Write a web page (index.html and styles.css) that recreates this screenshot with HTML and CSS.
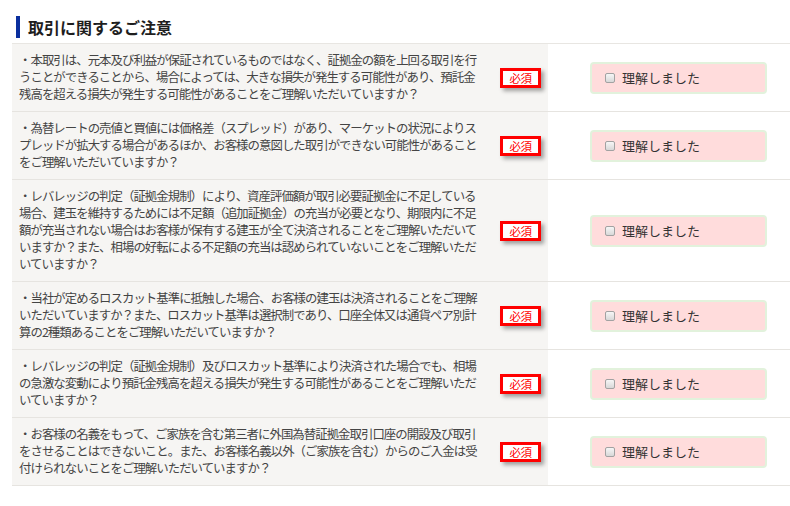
FILE: index.html
```html
<!DOCTYPE html>
<html lang="ja">
<head>
<meta charset="utf-8">
<title>取引に関するご注意</title>
<link rel="stylesheet" href="styles.css">
</head>
<body>
<div class="page">
  <h2 class="title">取引に関するご注意</h2>
  <div class="table">
    <div class="row">
      <div class="q">
        <p class="qtext">・本取引は、元本及び利益が保証されているものではなく、証拠金の額を上回る取引を行<br>うことができることから、場合によっては、大きな損失が発生する可能性があり、預託金<br>残高を超える損失が発生する可能性があることをご理解いただいていますか？</p>
        <span class="badge">必須</span>
      </div>
      <div class="a"><label class="agree"><span class="cb"></span><span class="lbl">理解しました</span></label></div>
    </div>
    <div class="row">
      <div class="q">
        <p class="qtext">・為替レートの売値と買値には価格差（スプレッド）があり、マーケットの状況によりス<br>プレッドが拡大する場合があるほか、お客様の意図した取引ができない可能性があること<br>をご理解いただいていますか？</p>
        <span class="badge">必須</span>
      </div>
      <div class="a"><label class="agree"><span class="cb"></span><span class="lbl">理解しました</span></label></div>
    </div>
    <div class="row">
      <div class="q">
        <p class="qtext">・レバレッジの判定（証拠金規制）により、資産評価額が取引必要証拠金に不足している<br>場合、建玉を維持するためには不足額（追加証拠金）の充当が必要となり、期限内に不足<br>額が充当されない場合はお客様が保有する建玉が全て決済されることをご理解いただいて<br>いますか？また、相場の好転による不足額の充当は認められていないことをご理解いただ<br>いていますか？</p>
        <span class="badge">必須</span>
      </div>
      <div class="a"><label class="agree"><span class="cb"></span><span class="lbl">理解しました</span></label></div>
    </div>
    <div class="row">
      <div class="q">
        <p class="qtext">・当社が定めるロスカット基準に抵触した場合、お客様の建玉は決済されることをご理解<br>いただいていますか？また、ロスカット基準は選択制であり、口座全体又は通貨ペア別計<br>算の2種類あることをご理解いただいていますか？</p>
        <span class="badge">必須</span>
      </div>
      <div class="a"><label class="agree"><span class="cb"></span><span class="lbl">理解しました</span></label></div>
    </div>
    <div class="row">
      <div class="q">
        <p class="qtext">・レバレッジの判定（証拠金規制）及びロスカット基準により決済された場合でも、相場<br>の急激な変動により預託金残高を超える損失が発生する可能性があることをご理解いただ<br>いていますか？</p>
        <span class="badge">必須</span>
      </div>
      <div class="a"><label class="agree"><span class="cb"></span><span class="lbl">理解しました</span></label></div>
    </div>
    <div class="row">
      <div class="q">
        <p class="qtext">・お客様の名義をもって、ご家族を含む第三者に外国為替証拠金取引口座の開設及び取引<br>をさせることはできないこと。また、お客様名義以外（ご家族を含む）からのご入金は受<br>付けられないことをご理解いただいていますか？</p>
        <span class="badge">必須</span>
      </div>
      <div class="a"><label class="agree"><span class="cb"></span><span class="lbl">理解しました</span></label></div>
    </div>
  </div>
</div>
</body>
</html>
```

FILE: styles.css
```css
html, body {
  margin: 0;
  padding: 0;
  background: #ffffff;
}
body {
  font-family: "Noto Sans CJK JP", "Noto Sans", sans-serif;
  color: #444444;
}
.page {
  padding: 16px 0 0 12px;
}
.title {
  margin: 0 0 5px 4px;
  border-left: 4px solid #0a2f9e;
  padding-left: 8px;
  height: 22px;
  line-height: 22px;
  font-size: 16px;
  font-weight: bold;
  color: #1e1e1e;
}
.table {
  border-top: 1px solid #e8e6e2;
}
.row {
  display: grid;
  grid-template-columns: 536px 1fr;
  border-bottom: 1px solid #e6e4e0;
}
.q {
  display: flex;
  align-items: center;
  background: #f6f5f3;
  padding: 8px 0 8px 7px;
}
.qtext {
  margin: 0;
  width: 474px;
  font-size: 12.4px;
  letter-spacing: -0.95px;
  line-height: 17px;
  white-space: nowrap;
  color: #444444;
}
.badge {
  margin-left: 7px;
  box-sizing: border-box;
  width: 41px;
  height: 20px;
  border: 3px solid #ff0000;
  background: #ffffff;
  color: #ff0000;
  font-size: 11.5px;
  line-height: 14px;
  text-align: center;
  letter-spacing: -0.5px;
  box-shadow: 3px 3px 4px rgba(0, 0, 0, 0.35);
}
.a {
  display: flex;
  align-items: center;
  padding-left: 42px;
}
.agree {
  box-sizing: border-box;
  width: 177px;
  height: 32px;
  display: flex;
  align-items: center;
  padding-left: 13px;
  background: #ffdcdc;
  border: 2px solid #e2f2dc;
  border-radius: 4px;
}
.cb {
  box-sizing: border-box;
  width: 10px;
  height: 10px;
  border: 1px solid #a2a2a2;
  border-radius: 2px;
  background: linear-gradient(#f6f6f6, #d8d8d8);
}
.lbl {
  margin-left: 7px;
  font-size: 13px;
  letter-spacing: 0;
  color: #333333;
}
```
